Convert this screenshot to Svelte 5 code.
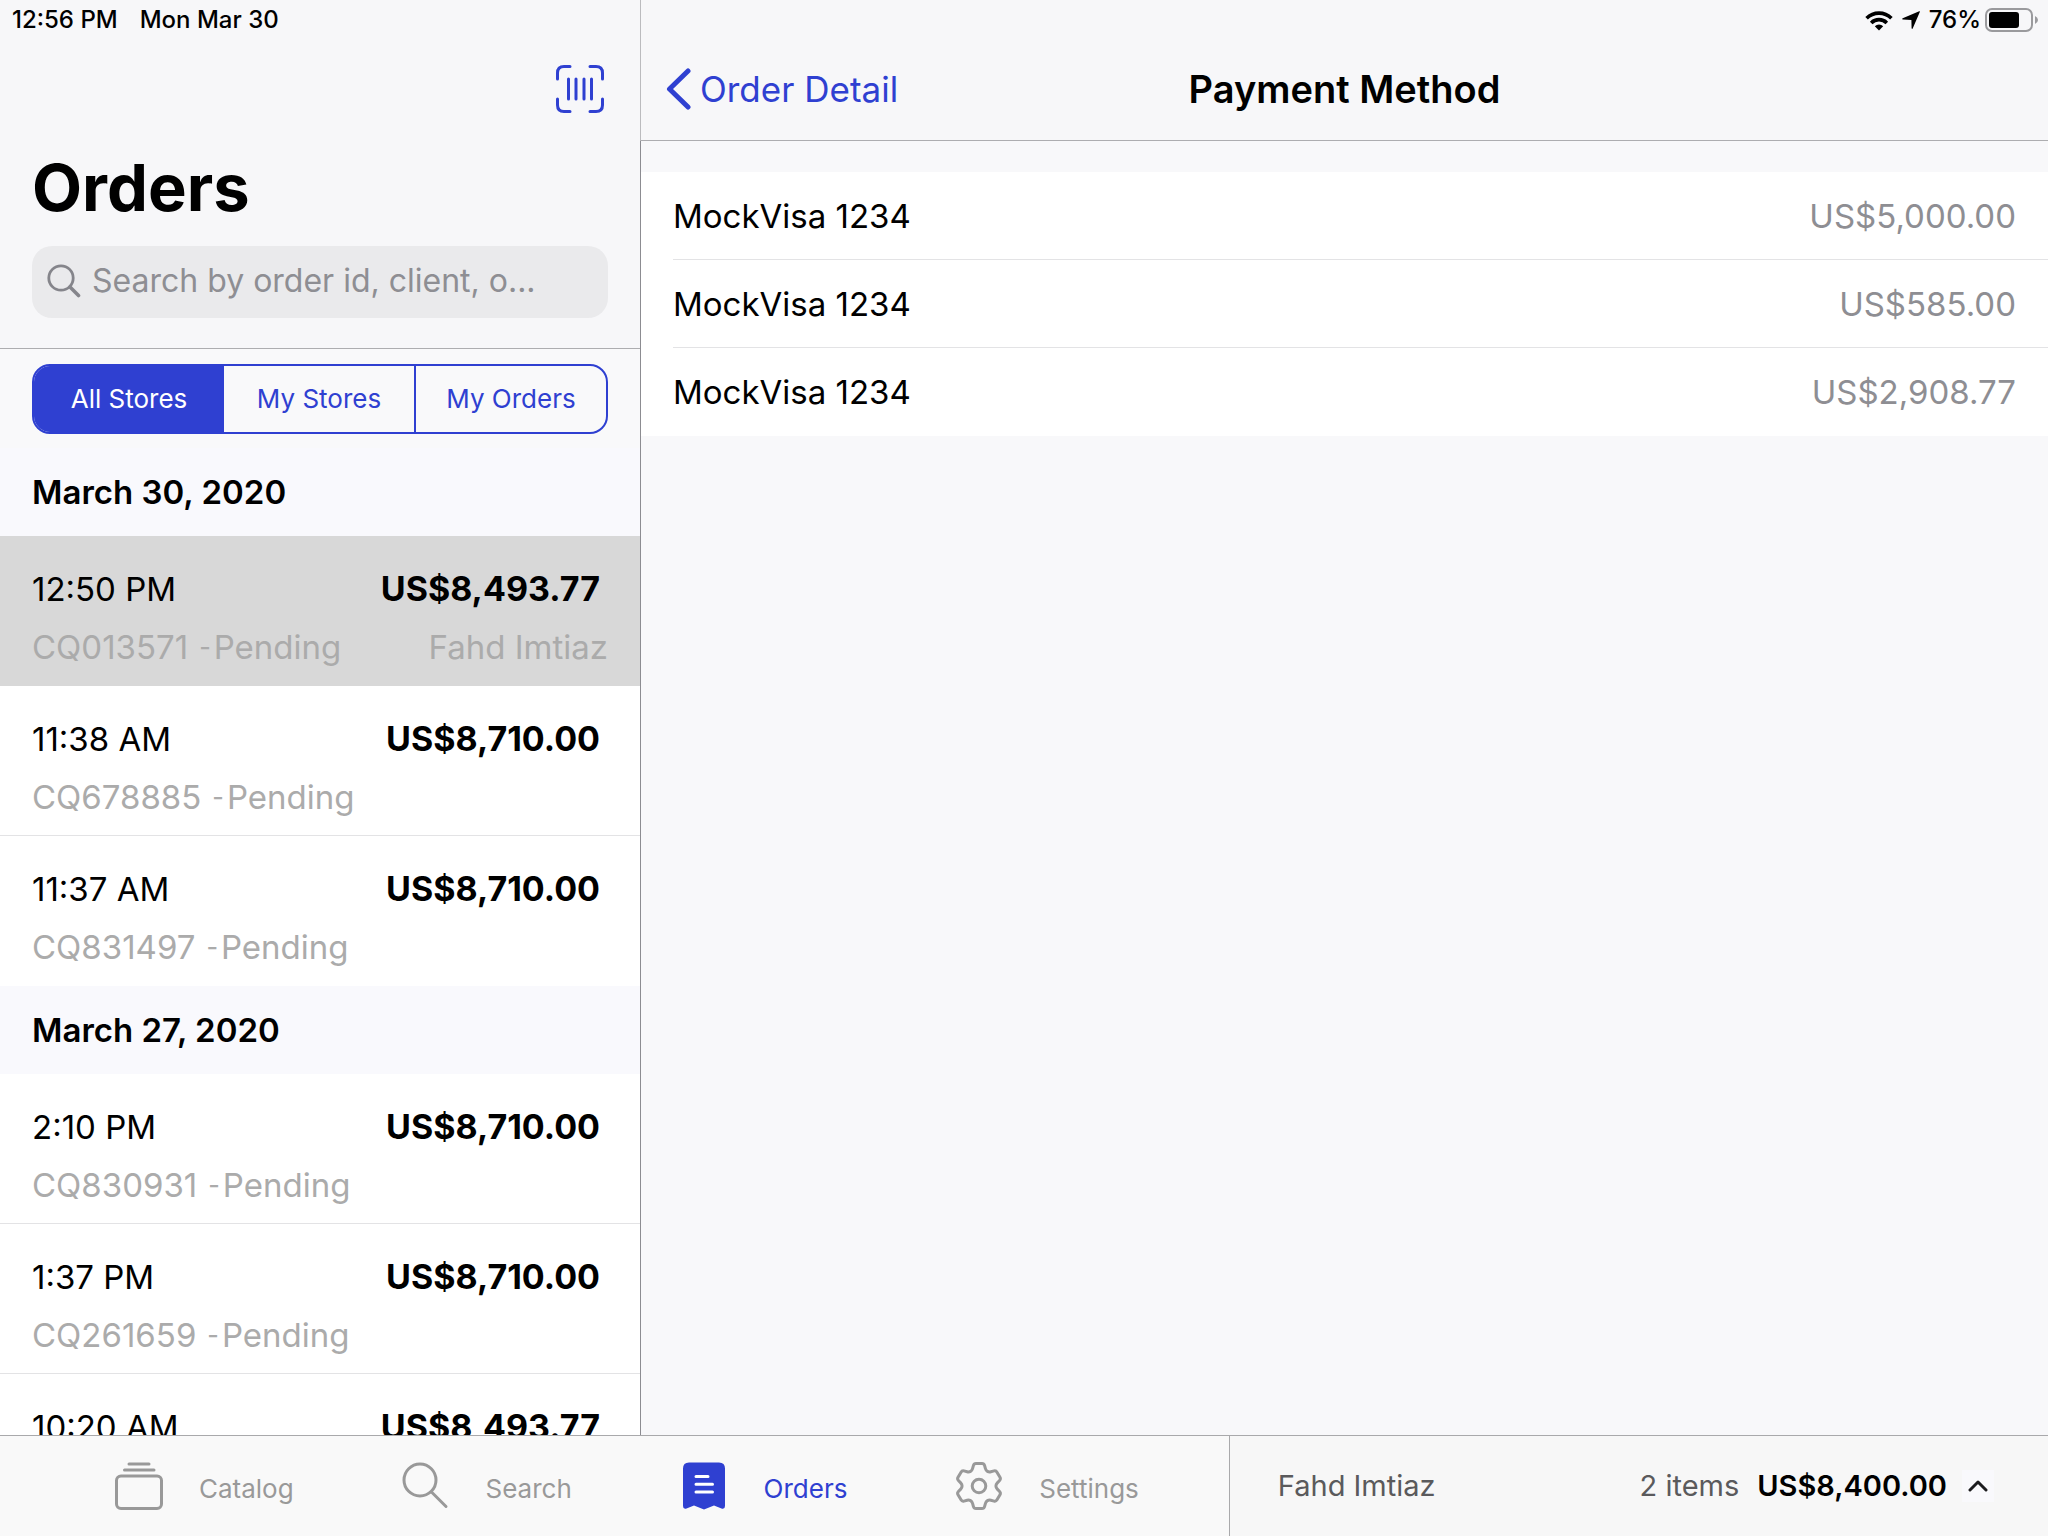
<script>
  const groups = [
    {
      date: 'March 30, 2020',
      orders: [
        { time: '12:50 PM', total: 'US$8,493.77', id: 'CQ013571', status: 'Pending', client: 'Fahd Imtiaz' },
        { time: '11:38 AM', total: 'US$8,710.00', id: 'CQ678885', status: 'Pending', client: '' },
        { time: '11:37 AM', total: 'US$8,710.00', id: 'CQ831497', status: 'Pending', client: '' }
      ]
    },
    {
      date: 'March 27, 2020',
      orders: [
        { time: '2:10 PM', total: 'US$8,710.00', id: 'CQ830931', status: 'Pending', client: '' },
        { time: '1:37 PM', total: 'US$8,710.00', id: 'CQ261659', status: 'Pending', client: '' },
        { time: '10:20 AM', total: 'US$8,493.77', id: '', status: '', client: '' }
      ]
    }
  ];

  const payments = [
    { card: 'MockVisa 1234', amount: 'US$5,000.00' },
    { card: 'MockVisa 1234', amount: 'US$585.00' },
    { card: 'MockVisa 1234', amount: 'US$2,908.77' }
  ];

  const filters = ['All Stores', 'My Stores', 'My Orders'];
  const tabs = ['Catalog', 'Search', 'Orders', 'Settings'];

  let filter = $state('All Stores');
  let tab = $state('Orders');
  let selected = $state('CQ013571');
  let query = $state('');

  // Six-toothed gear outline around (24, 24), with every corner rounded.
  function gearPath() {
    const tooth = [[-7, -15.5], [-5, -22.5], [5, -22.5], [7, -15.5]];
    const pts = [];
    for (let k = 0; k < 6; k++) {
      const a = (k * Math.PI) / 3;
      for (const [x, y] of tooth) {
        pts.push([24 + x * Math.cos(a) - y * Math.sin(a), 24 + x * Math.sin(a) + y * Math.cos(a)]);
      }
    }
    const toward = (p, q, d) => {
      const l = Math.hypot(q[0] - p[0], q[1] - p[1]);
      const t = Math.min(d, l / 2) / l;
      return [p[0] + (q[0] - p[0]) * t, p[1] + (q[1] - p[1]) * t];
    };
    return (
      pts
        .map((p, i) => {
          const a = toward(p, pts[(i + pts.length - 1) % pts.length], 2);
          const b = toward(p, pts[(i + 1) % pts.length], 2);
          return `${i ? 'L' : 'M'}${a.join(' ')}Q${p.join(' ')} ${b.join(' ')}`;
        })
        .join('') + 'Z'
    );
  }
  const gear = gearPath();
</script>

<div class="app">
  <div class="split">
    <aside class="sidebar">
      <header class="side-head">
        <div class="status"><span>12:56 PM</span><span>Mon Mar 30</span></div>
        <div class="side-nav">
          <button class="icon-btn" aria-label="Scan barcode">
            <svg width="48" height="48" viewBox="0 0 48 48" fill="none" stroke="currentColor" stroke-width="3" stroke-linecap="round">
              <path d="M1.5 14V8Q1.5 1.5 8 1.5H14M34 1.5H40Q46.5 1.5 46.5 8V14M46.5 34V40Q46.5 46.5 40 46.5H34M14 46.5H8Q1.5 46.5 1.5 40V34" />
              <path d="M12.5 14V34M20 14V34M28 14V34M35.5 14V34" />
            </svg>
          </button>
        </div>
        <h1>Orders</h1>
        <label class="search">
          <svg width="34" height="34" viewBox="0 0 34 34" fill="none" stroke="#85858b" stroke-linecap="round">
            <circle cx="14" cy="14" r="12.2" stroke-width="2.8" />
            <path d="M23 23L31.5 31.5" stroke-width="3.6" />
          </svg>
          <input type="text" bind:value={query} aria-label="Search orders" placeholder="Search by order id, client, o..." />
        </label>
      </header>

      <div class="filters">
        <div class="segments">
          {#each filters as f}
            <button class:active={filter === f} aria-pressed={filter === f} onclick={() => (filter = f)}>{f}</button>
          {/each}
        </div>
      </div>

      <div class="orders">
        {#each groups as group}
          <section>
            <h2>{group.date}</h2>
            {#each group.orders as order}
              <button class="order" class:selected={order.id === selected} onclick={() => (selected = order.id)}>
                <span class="line">
                  <span>{order.time}</span>
                  <span class="total">{order.total}</span>
                </span>
                <span class="line meta">
                  {#if order.id}
                    <span class="ref"><span>{order.id}</span><span class="dash">-</span><span>{order.status}</span></span>
                  {/if}
                  <span>{order.client}</span>
                </span>
              </button>
            {/each}
          </section>
        {/each}
      </div>
    </aside>

    <main class="detail">
      <header class="detail-head">
        <div class="status right">
          <svg width="28" height="21" viewBox="0 0 28 21" fill="none" stroke="#000" stroke-width="3.6">
            <path d="M1.6 8.2A17.6 17.6 0 0 1 26.4 8.2" />
            <path d="M6.2 12.9A11 11 0 0 1 21.8 12.9" />
            <path d="M14 20.5L9.8 16.2A6 6 0 0 1 18.2 16.2Z" fill="#000" stroke="none" />
          </svg>
          <svg class="locate" width="18" height="18" viewBox="0 0 18 18"><path d="M17.2 0.3Q18.2 0 17.8 1L10.8 17.3Q10 18.6 9.6 17.2L9.4 8.9L0.9 8.6Q-0.6 8.2 0.7 7.3Z" /></svg>
          <span class="pct">76%</span>
          <svg width="54" height="24" viewBox="0 0 54 24">
            <rect x="1" y="1" width="46" height="22" rx="6" fill="none" stroke="#9a9a9d" stroke-width="2" />
            <rect x="4" y="4" width="30" height="16" rx="3" />
            <path d="M50 8Q53 9.5 53 12T50 16Z" fill="#9a9a9d" />
          </svg>
        </div>
        <div class="detail-nav">
          <button class="back">
            <svg width="25" height="42" viewBox="0 0 25 42" fill="none" stroke="currentColor" stroke-width="5" stroke-linecap="round" stroke-linejoin="round"><path d="M22 3L3.5 21L22 39" /></svg>
            <span>Order Detail</span>
          </button>
          <h2>Payment Method</h2>
        </div>
      </header>
      <div class="detail-body">
        <ul>
          {#each payments as p}
            <li><span>{p.card}</span><span class="amount">{p.amount}</span></li>
          {/each}
        </ul>
      </div>
    </main>
  </div>

  <footer class="bar">
    <nav class="tabs">
      {#each tabs as t}
        <button class="tab" class:current={tab === t} onclick={() => (tab = t)}>
          <svg width="48" height="48" viewBox="0 0 48 48" fill="none" stroke="currentColor" stroke-width="3" stroke-linecap="round" stroke-linejoin="round">
            {#if t === 'Catalog'}
              <path d="M14 2H34M9.5 8H39" />
              <rect x="1.5" y="14" width="45" height="32.5" rx="4.5" />
            {:else if t === 'Search'}
              <circle cx="19" cy="18" r="16" />
              <path d="M30.5 30L45 44.5" />
            {:else if t === 'Orders'}
              <path d="M3 6.5Q3 0.5 9 0.5H39Q45 0.5 45 6.5V44Q45 47.4 41.5 46.4L34 43.5L24 47.5L14 43.5L6.5 46.4Q3 47.4 3 44Z" fill="currentColor" stroke="none" />
              <path d="M16 14.5H28M16 22.3H32.5M16 30H32.5" stroke="#fff" />
            {:else}
              <path d={gear} />
              <circle cx="24" cy="24" r="6.8" />
            {/if}
          </svg>
          <span>{t}</span>
        </button>
      {/each}
    </nav>
    <div class="cart">
      <span class="customer">Fahd Imtiaz</span>
      <span class="count">2 items</span>
      <strong>US$8,400.00</strong>
      <button class="expand" aria-label="Show cart">
        <svg width="20" height="12" viewBox="0 0 20 12" fill="none" stroke="#1c1c1e" stroke-width="3" stroke-linecap="round" stroke-linejoin="round"><path d="M2 10L10 2L18 10" /></svg>
      </button>
    </div>
  </footer>
</div>

<style>
  :global(body) {
    margin: 0;
    background: #f8f8fa;
  }
  .app {
    height: 100vh;
    display: flex;
    flex-direction: column;
    overflow: hidden;
    font-family: Inter, 'Liberation Sans', sans-serif;
    font-size: 33px;
    line-height: 40px;
    color: #000;
  }
  button {
    appearance: none;
    border: 0;
    margin: 0;
    padding: 0;
    background: none;
    font: inherit;
    color: inherit;
    cursor: pointer;
  }
  svg {
    display: block;
    flex: none;
  }
  h1,
  h2,
  ul {
    margin: 0;
    padding: 0;
  }
  .split {
    flex: 1;
    min-height: 0;
    display: flex;
  }
  .sidebar {
    width: 31.25%;
    display: flex;
    flex-direction: column;
    background: #fff;
  }
  .side-head {
    background: #f7f7f9;
    padding-bottom: 30px;
    border-bottom: 1px solid #adadb0;
  }
  .status {
    height: 40px;
    padding: 0 12px;
    display: flex;
    align-items: center;
    gap: 22px;
    font-size: 24px;
    font-weight: 500;
    white-space: nowrap;
  }
  .status.right {
    justify-content: flex-end;
    gap: 9px;
    padding: 0 9px;
  }
  .pct {
    margin-right: -5px;
  }
  .side-nav {
    height: 98px;
    padding: 0 36px;
    display: flex;
    align-items: center;
    justify-content: flex-end;
    color: #2f40d1;
  }
  h1 {
    margin: 10px 32px 18px;
    font-size: 65px;
    line-height: 80px;
    font-weight: 700;
  }
  .search {
    height: 72px;
    margin: 0 32px;
    padding: 0 15px 2px;
    box-sizing: border-box;
    display: flex;
    align-items: center;
    gap: 11px;
    border-radius: 20px;
    background: #eaeaec;
  }
  .search input {
    flex: 1;
    min-width: 0;
    padding: 0;
    border: 0;
    outline: 0;
    background: none;
    font: inherit;
    font-size: 32px;
    color: #000;
  }
  .search input::placeholder {
    color: #8e8e93;
    opacity: 1;
  }
  .filters {
    padding: 15px 32px 14px;
    background: #f9f9fa;
  }
  .segments {
    height: 70px;
    box-sizing: border-box;
    display: flex;
    border: 2px solid #2f40d1;
    border-radius: 18px;
    overflow: hidden;
  }
  .segments button {
    flex: 1;
    font-size: 26px;
    color: #2f40d1;
  }
  .segments button:nth-child(2) {
    border-right: 2px solid #2f40d1;
  }
  .segments .active {
    background: #2f40d1;
    color: #fff;
  }
  .orders {
    flex: 1;
    min-height: 0;
    overflow: hidden;
  }
  .orders h2 {
    padding: 24px 32px;
    font-size: 33px;
    line-height: 40px;
    font-weight: 600;
    background: #f9f9fd;
  }
  .order {
    width: 100%;
    height: 150px;
    box-sizing: border-box;
    padding: 33px 32px 18px;
    display: flex;
    flex-direction: column;
    gap: 18px;
    border-bottom: 1px solid #e3e3e5;
    text-align: left;
  }
  .order:last-child {
    border-bottom-color: transparent;
  }
  .order.selected {
    background: #d8d8d8;
    border-bottom-color: #d8d8d8;
  }
  .line {
    width: 100%;
    height: 40px;
    display: flex;
    justify-content: space-between;
    white-space: nowrap;
  }
  .total {
    padding-right: 8px;
    font-size: 34px;
    font-weight: 700;
  }
  .meta {
    color: #ababab;
  }
  .ref {
    display: flex;
  }
  .dash {
    padding: 0 3px 0 11px;
    font-size: 25px;
    font-weight: 500;
  }
  .detail {
    flex: 1;
    min-width: 0;
    display: flex;
    flex-direction: column;
  }
  .detail-head {
    background: #f7f7f9;
    padding-bottom: 2px;
    border-left: 1px solid #bbbbbe;
    border-bottom: 1px solid #adadb0;
  }
  .detail-nav {
    height: 98px;
    padding: 0 25px;
    display: grid;
    grid-template-columns: 1fr auto 1fr;
    align-items: center;
  }
  .back {
    display: flex;
    align-items: center;
    gap: 9px;
    color: #2f40d1;
    font-size: 35px;
    white-space: nowrap;
  }
  .detail-nav h2 {
    font-size: 38px;
    font-weight: 600;
  }
  .detail-body {
    flex: 1;
    padding-top: 31px;
    border-left: 1px solid #8c8c91;
    background: #f8f8fa;
  }
  ul {
    list-style: none;
    padding-left: 32px;
    background: #fff;
  }
  li {
    height: 88px;
    box-sizing: border-box;
    padding-right: 32px;
    display: flex;
    align-items: center;
    justify-content: space-between;
    border-bottom: 1px solid #e3e3e5;
  }
  li:last-child {
    border-bottom-color: transparent;
  }
  .amount {
    color: #8e8e93;
  }
  .bar {
    height: 100px;
    display: flex;
    border-top: 1px solid #a9a9ab;
    background: #f9f9f9;
  }
  .tabs {
    width: 60%;
    padding: 0 90px 0 115px;
    display: flex;
    align-items: center;
    justify-content: space-between;
    box-sizing: border-box;
  }
  .tab {
    display: flex;
    align-items: center;
    gap: 36px;
    font-size: 26px;
    color: #999;
  }
  .tab span {
    padding-top: 5px;
  }
  .tab.current {
    color: #2f40d1;
  }
  .cart {
    width: 40%;
    box-sizing: border-box;
    padding: 0 54px 0 48px;
    display: flex;
    align-items: center;
    border-left: 1px solid #a9a9ab;
    background: #f7f7f7;
    font-size: 29px;
    color: #5a5a5c;
    white-space: nowrap;
  }
  .customer {
    flex: 1;
  }
  .cart strong {
    margin: 0 15px 0 18px;
    font-weight: 600;
    color: #000;
  }
  .expand {
    width: 32px;
    height: 32px;
    display: grid;
    place-items: center;
    background: #f9f9fc;
  }
</style>
